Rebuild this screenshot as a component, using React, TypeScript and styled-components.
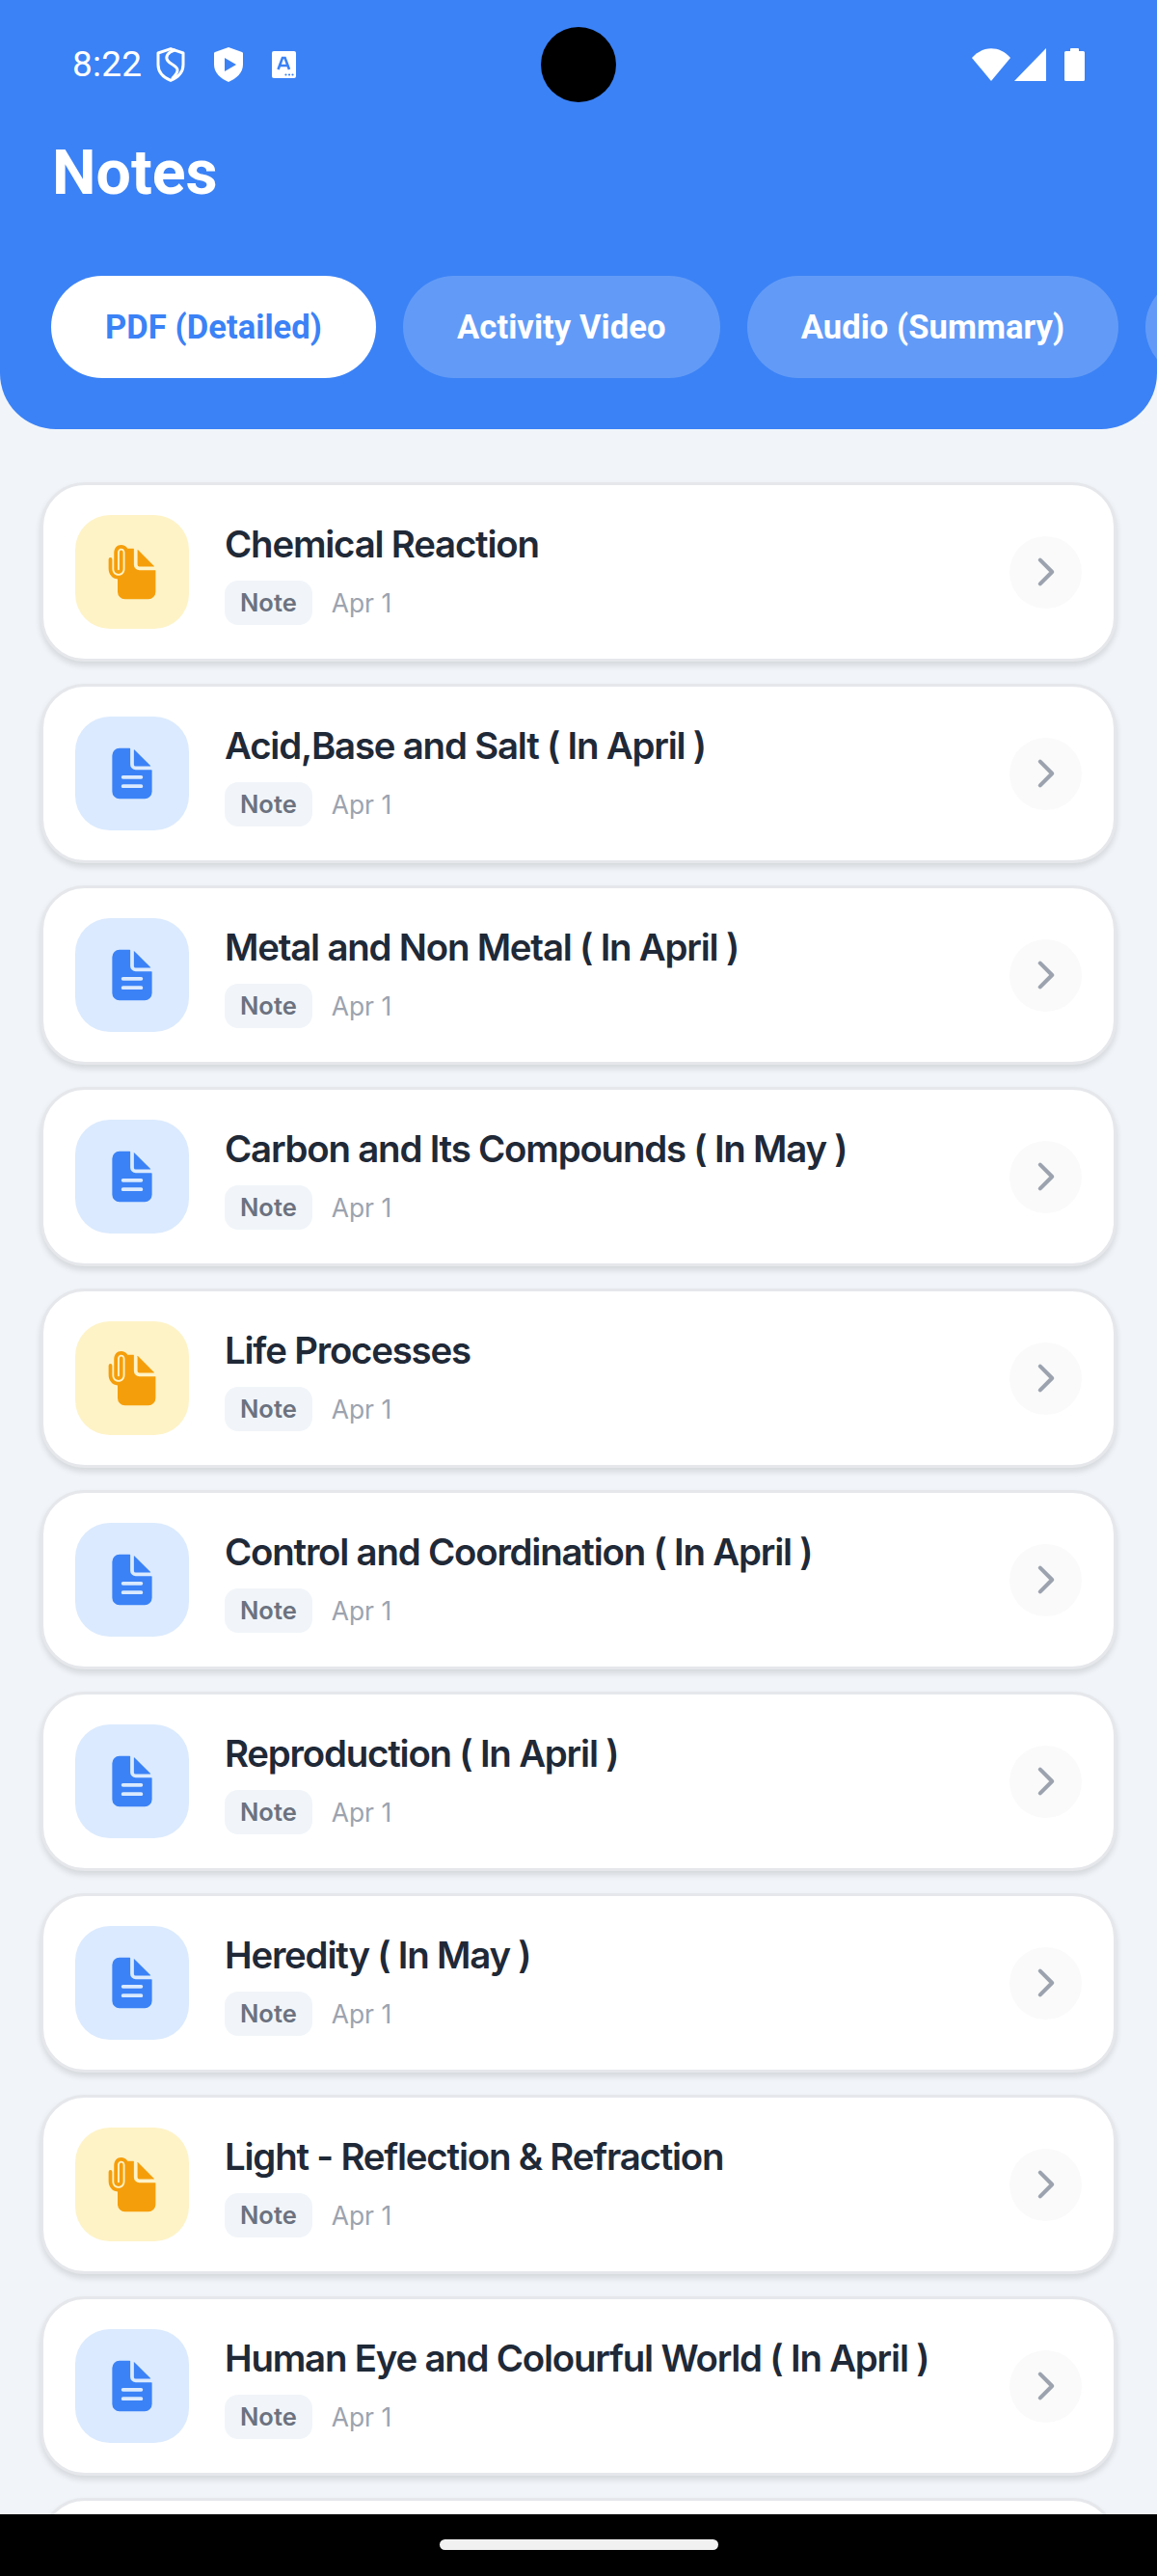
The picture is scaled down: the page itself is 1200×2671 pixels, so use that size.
import React from "react";
import styled, { createGlobalStyle } from "styled-components";
import { IoDocumentText, IoDocumentAttach, IoChevronForward } from "react-icons/io5";

const Global = createGlobalStyle`
  html, body { margin: 0; padding: 0; width: 1200px; height: 2671px; overflow: hidden; background: #f1f5f9; }
  * { box-sizing: border-box; }
`;

const Screen = styled.div`
  position: relative;
  width: 1200px;
  height: 2671px;
  display: flex;
  flex-direction: column;
  background: #f1f5f9;
  overflow: hidden;
`;
const Header = styled.header`
  flex: none;
  height: 445px;
  background: #3b82f6;
  border-radius: 0 0 58px 58px;
  display: flex;
  flex-direction: column;
`;
const StatusBar = styled.div`
  height: 133px;
  padding: 0 75px 0 75px;
  display: flex;
  align-items: center;
  color: #fff;
`;
const Time = styled.span`
  font: 400 37px/44px Roboto, sans-serif;
  letter-spacing: 0.2px;
  margin-right: 15px;
`;
const StatusIcons = styled.div<{ $gap: number; $offset?: number }>`
  display: flex;
  align-items: center;
  gap: ${(p) => p.$gap}px;
  margin-left: ${(p) => p.$offset ?? 0}px;
`;
const Spacer = styled.div`
  flex: 1;
`;
const Camera = styled.div`
  position: absolute;
  left: 561px;
  top: 28px;
  width: 78px;
  height: 78px;
  border-radius: 50%;
  background: #000;
`;
const Title = styled.h1`
  margin: 0;
  padding: 10px 0 0 54px;
  height: 153px;
  font: 700 64.5px/72px Roboto, sans-serif;
  color: #fff;
`;
const Tabs = styled.div`
  display: flex;
  gap: 28px;
  padding-left: 53px;
  overflow: hidden;
`;
const Tab = styled.div<{ $active?: boolean }>`
  flex: none;
  height: 106px;
  min-width: 200px;
  padding: 0 56px;
  border-radius: 53px;
  display: flex;
  align-items: center;
  font: 700 34.6px/40px Roboto, sans-serif;
  letter-spacing: 0.05px;
  white-space: nowrap;
  color: ${(p) => (p.$active ? "#3b82f6" : "#fff")};
  background: ${(p) => (p.$active ? "#fff" : "rgba(255,255,255,0.2)")};
`;
const List = styled.main`
  flex: 1;
  min-height: 0;
  overflow: hidden;
  padding: 55px 42px 0 42px;
  display: flex;
  flex-direction: column;
  gap: 23px;
`;
const Card = styled.article`
  flex: none;
  height: 186px;
  background: #fff;
  border: 3px solid #e5e7eb;
  border-radius: 46px;
  box-shadow: 0 4px 6px rgba(0, 0, 0, 0.12);
  padding: 0 33px 0 33px;
  display: flex;
  align-items: center;
`;
const IconBox = styled.div<{ $tone: "blue" | "amber" }>`
  flex: none;
  width: 118px;
  height: 118px;
  border-radius: 36px;
  display: flex;
  align-items: center;
  justify-content: center;
  color: ${(p) => (p.$tone === "blue" ? "#3b82f6" : "#f59e0b")};
  background: ${(p) => (p.$tone === "blue" ? "#dbeafe" : "#fef3c7")};
`;
const Body = styled.div`
  flex: 1;
  min-width: 0;
  margin: 3px 0 0 37px;
  display: flex;
  flex-direction: column;
  gap: 15px;
`;
const CardTitle = styled.div`
  font: 600 38.4px/46px Inter, sans-serif;
  letter-spacing: -1.2px;
  color: #1f2937;
  white-space: nowrap;
`;
const Meta = styled.div`
  display: flex;
  align-items: center;
  gap: 20px;
`;
const Tag = styled.span`
  height: 46px;
  padding: 0 16px;
  border-radius: 14px;
  background: #f1f5f9;
  display: flex;
  align-items: center;
  font: 600 25.5px/32px Inter, sans-serif;
  color: #6b7280;
`;
const DateText = styled.span`
  font: 400 26.4px/32px Inter, sans-serif;
  color: #9ca3af;
`;
const Chevron = styled.div`
  flex: none;
  width: 75px;
  height: 75px;
  border-radius: 50%;
  background: #f9faf9;
  display: flex;
  align-items: center;
  justify-content: center;
  color: #9ca3af;
`;
const NavBar = styled.div`
  flex: none;
  height: 64px;
  background: #000;
  display: flex;
  justify-content: center;
  padding-top: 26px;
`;
const HomePill = styled.div`
  width: 289px;
  height: 11px;
  border-radius: 6px;
  background: #f1f1f1;
`;

const ShieldOutline = () => (
  <svg width="30" height="36" viewBox="0 0 30 36" fill="none" stroke="#fff" strokeWidth="3">
    <path d="M15 1.6 L28 6 V18 C28 26 22 31.5 15 34.4 C8 31.5 2 26 2 18 V6 Z" strokeLinejoin="round" />
    <path d="M19 3 C12 5 9 10 12 14 C15 18 21 19 22 23 C22.6 26 20 29 17 32" strokeLinecap="round" />
  </svg>
);
const ShieldPlay = () => (
  <svg width="30" height="36" viewBox="0 0 30 36">
    <path d="M15 0 L29 5 a1.5 1.5 0 0 1 1 1.5 V18 C30 26.5 23 32.5 15 36 C7 32.5 0 26.5 0 18 V6.5 a1.5 1.5 0 0 1 1-1.5 Z" fill="#fff" />
    <path d="M11 11 L23 18 L11 25 Z" fill="#3b82f6" />
  </svg>
);
const TranslateCard = () => (
  <svg width="25" height="28" viewBox="0 0 25 28">
    <rect width="25" height="28" rx="2" fill="#fff" />
    <path d="M6.5 19 L11 7 H13.6 L18 19 M8.4 15 H16" fill="none" stroke="#3b82f6" strokeWidth="2.6" />
    <circle cx="14.5" cy="24.5" r="1.1" fill="#3b82f6" />
    <circle cx="18" cy="24.5" r="1.1" fill="#3b82f6" />
    <circle cx="21.5" cy="24.5" r="1.1" fill="#3b82f6" />
  </svg>
);
const Wifi = () => (
  <svg width="40" height="34" viewBox="0 0 40 34">
    <path d="M0 10 C11 -3 29 -3 40 10 L20 34 Z" fill="#fff" />
  </svg>
);
const Signal = () => (
  <svg width="33" height="34" viewBox="0 0 33 34">
    <path d="M33 0 V34 H0 Z" fill="#fff" />
  </svg>
);
const Battery = () => (
  <svg width="21" height="34" viewBox="0 0 21 34">
    <path d="M6 3 V1 a1 1 0 0 1 1-1 h7 a1 1 0 0 1 1 1 V3 h4.5 a1.5 1.5 0 0 1 1.5 1.5 V32.5 a1.5 1.5 0 0 1-1.5 1.5 h-18 A1.5 1.5 0 0 1 0 32.5 V4.5 A1.5 1.5 0 0 1 1.5 3 Z" fill="#fff" />
  </svg>
);

const notes: { title: string; attach?: boolean }[] = [
  { title: "Chemical Reaction", attach: true },
  { title: "Acid,Base and Salt ( In April )" },
  { title: "Metal and Non Metal ( In April )" },
  { title: "Carbon and Its Compounds ( In May )" },
  { title: "Life Processes", attach: true },
  { title: "Control and Coordination ( In April )" },
  { title: "Reproduction ( In April )" },
  { title: "Heredity ( In May )" },
  { title: "Light - Reflection & Refraction", attach: true },
  { title: "Human Eye and Colourful World ( In April )" },
];

export default function App() {
  return (
    <Screen>
      <Global />
      <Header>
        <StatusBar>
          <Time>8:22</Time>
          <StatusIcons $gap={30}>
            <ShieldOutline />
            <ShieldPlay />
            <TranslateCard />
          </StatusIcons>
          <Spacer />
          <StatusIcons $gap={4}>
            <Wifi />
            <Signal />
          </StatusIcons>
          <StatusIcons $gap={0} $offset={19}>
            <Battery />
          </StatusIcons>
        </StatusBar>
        <Title>Notes</Title>
        <Tabs>
          <Tab $active>PDF (Detailed)</Tab>
          <Tab>Activity Video</Tab>
          <Tab>Audio (Summary)</Tab>
          <Tab />
        </Tabs>
      </Header>
      <List>
        {notes.map((n) => (
          <Card key={n.title}>
            <IconBox $tone={n.attach ? "amber" : "blue"}>
              {n.attach ? <IoDocumentAttach size={60} /> : <IoDocumentText size={60} />}
            </IconBox>
            <Body>
              <CardTitle>{n.title}</CardTitle>
              <Meta>
                <Tag>Note</Tag>
                <DateText>Apr 1</DateText>
              </Meta>
            </Body>
            <Chevron>
              <IoChevronForward size={44} />
            </Chevron>
          </Card>
        ))}
        <Card />
      </List>
      <NavBar>
        <HomePill />
      </NavBar>
      <Camera />
    </Screen>
  );
}
